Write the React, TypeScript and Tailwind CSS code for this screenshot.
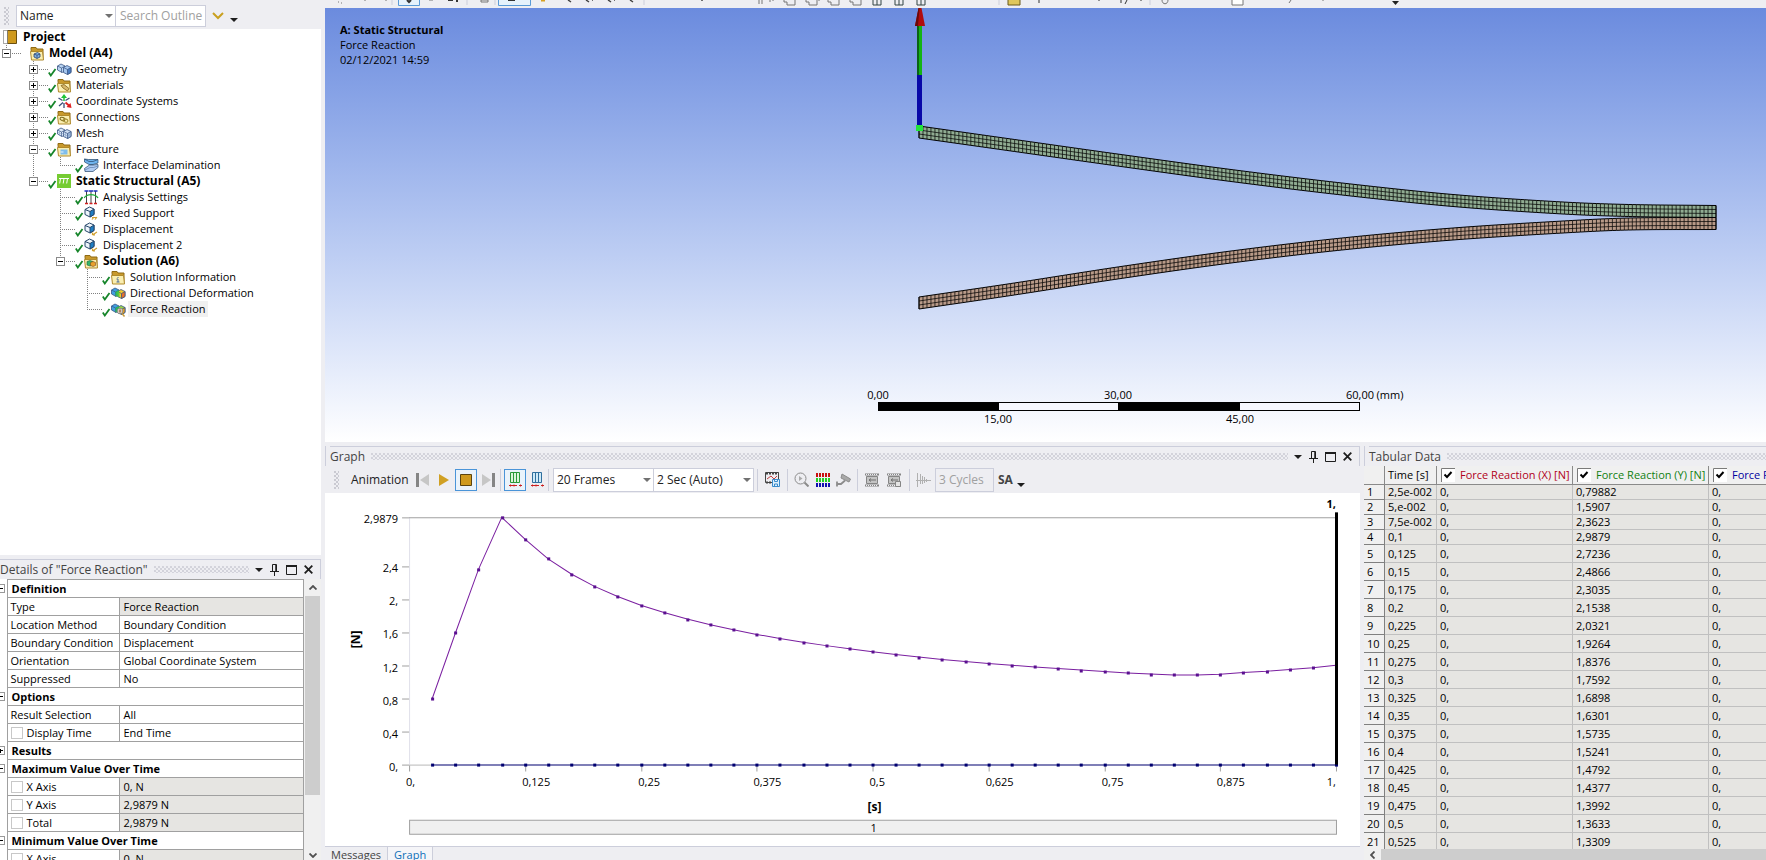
import type { ReactNode } from "react";
import clsx from "clsx";

/* ---------- data ---------- */

type TreeNode = {
  label: string;
  icon: string;
  level: number;
  guides: boolean[];
  expander?: "+" | "-";
  last?: boolean;
  bold?: boolean;
  check?: boolean;
  selected?: boolean;
};

const treeNodes: TreeNode[] = [
  { label: "Model (A4)", icon: "model", level: 0, guides: [], expander: "-", bold: true, last: true },
  { label: "Geometry", icon: "geometry", level: 1, guides: [false], expander: "+", check: true },
  { label: "Materials", icon: "materials", level: 1, guides: [false], expander: "+", check: true },
  { label: "Coordinate Systems", icon: "coords", level: 1, guides: [false], expander: "+", check: true },
  { label: "Connections", icon: "connections", level: 1, guides: [false], expander: "+", check: true },
  { label: "Mesh", icon: "mesh", level: 1, guides: [false], expander: "+", check: true },
  { label: "Fracture", icon: "fracture", level: 1, guides: [false], expander: "-", check: true },
  { label: "Interface Delamination", icon: "delamination", level: 2, guides: [false, true], last: true, check: true },
  { label: "Static Structural (A5)", icon: "static", level: 1, guides: [false], expander: "-", last: true, bold: true, check: true },
  { label: "Analysis Settings", icon: "settings", level: 2, guides: [false, false], check: true },
  { label: "Fixed Support", icon: "support", level: 2, guides: [false, false], check: true },
  { label: "Displacement", icon: "displacement", level: 2, guides: [false, false], check: true },
  { label: "Displacement 2", icon: "displacement", level: 2, guides: [false, false], check: true },
  { label: "Solution (A6)", icon: "solution", level: 2, guides: [false, false], expander: "-", last: true, bold: true, check: true },
  { label: "Solution Information", icon: "info", level: 3, guides: [false, false, false], check: true },
  { label: "Directional Deformation", icon: "deformation", level: 3, guides: [false, false, false], check: true },
  { label: "Force Reaction", icon: "reaction", level: 3, guides: [false, false, false], last: true, check: true, selected: true },
];

type DetailRow =
  | { group: string; open: boolean }
  | { name: string; value: string; checkbox?: boolean; readOnly?: boolean };

const detailRows: DetailRow[] = [
  { group: "Definition", open: true },
  { name: "Type", value: "Force Reaction", readOnly: true },
  { name: "Location Method", value: "Boundary Condition" },
  { name: "Boundary Condition", value: "Displacement" },
  { name: "Orientation", value: "Global Coordinate System" },
  { name: "Suppressed", value: "No" },
  { group: "Options", open: true },
  { name: "Result Selection", value: "All" },
  { name: "Display Time", value: "End Time", checkbox: true },
  { group: "Results", open: false },
  { group: "Maximum Value Over Time", open: true },
  { name: "X Axis", value: "0, N", checkbox: true, readOnly: true },
  { name: "Y Axis", value: "2,9879 N", checkbox: true, readOnly: true },
  { name: "Total", value: "2,9879 N", checkbox: true, readOnly: true },
  { group: "Minimum Value Over Time", open: true },
  { name: "X Axis", value: "0, N", checkbox: true, readOnly: true },
];

const tableRows = [
  ["2,5e-002", "0,79882"],
  ["5,e-002", "1,5907"],
  ["7,5e-002", "2,3623"],
  ["0,1", "2,9879"],
  ["0,125", "2,7236"],
  ["0,15", "2,4866"],
  ["0,175", "2,3035"],
  ["0,2", "2,1538"],
  ["0,225", "2,0321"],
  ["0,25", "1,9264"],
  ["0,275", "1,8376"],
  ["0,3", "1,7592"],
  ["0,325", "1,6898"],
  ["0,35", "1,6301"],
  ["0,375", "1,5735"],
  ["0,4", "1,5241"],
  ["0,425", "1,4792"],
  ["0,45", "1,4377"],
  ["0,475", "1,3992"],
  ["0,5", "1,3633"],
  ["0,525", "1,3309"],
];

const reaction = [
  0.79882, 1.5907, 2.3623, 2.9879, 2.7236, 2.4866, 2.3035, 2.1538, 2.0321,
  1.9264, 1.8376, 1.7592, 1.6898, 1.6301, 1.5735, 1.5241, 1.4792, 1.4377,
  1.3992, 1.3633, 1.3309, 1.3, 1.27, 1.245, 1.222, 1.2, 1.18, 1.16, 1.143,
  1.125, 1.108, 1.094, 1.083, 1.083, 1.093, 1.113, 1.128, 1.15, 1.17, 1.2,
];

/* ---------- tree icons ---------- */

const Folder = ({ children }: { children?: ReactNode }) => (
  <>
    <path d="M1 3.500V1.500h5l1 1.500h6v10H2.500z" fill="#c8992c" stroke="#8f6a14" />
    <path d="M.5 5.500h12l1 8.500h-12z" fill="#faeeb0" stroke="#b08a2c" />
    {children}
  </>
);

const Blocks = ({ a, b, c }: { a: string; b: string; c: string }) => (
  <>
    <path d="M.5 4L4 2l4 2v5l-3 1.500L.5 8z" fill={a} stroke="#3a5584" strokeWidth=".8" />
    <path d="M.5 4l4 2v4.500M4.500 6L8 4" stroke="#3a5584" strokeWidth=".7" fill="none" />
    <path d="M6.500 5.500l3.500-2 4 2v5l-3.500 2-4-2z" fill={b} stroke="#3a5584" strokeWidth=".8" />
    <path d="M10.500 7.500l3.500-2v5l-3.500 2z" fill={c} stroke="#3a5584" strokeWidth=".8" />
    <path d="M6.500 5.500l4 2" stroke="#3a5584" strokeWidth=".7" />
  </>
);

const LoadCube = () => (
  <>
    <path d="M1 3.500L5.500 1 10 3v5.500L6 11 1 8.500z" fill="#eef5fb" stroke="#27476b" />
    <path d="M6 5.500L10 3v5.500L6 11z" fill="#1f7fc4" stroke="#27476b" />
    <path d="M1 3.500l5 2" stroke="#27476b" />
  </>
);

const treeIcons: Record<string, ReactNode> = {
  model: (
    <Folder>
      <path d="M4 8l3.500-1.500L10 8v3l-3 1.500L4 11z" fill="#7fb0e2" stroke="#27406e" strokeWidth=".8" />
      <path d="M4 8l3 1.200L10 8M7 9.200v3" stroke="#27406e" strokeWidth=".7" fill="none" />
    </Folder>
  ),
  geometry: <Blocks a="#b9d4f2" b="#a5c6ee" c="#4a7cc0" />,
  mesh: (
    <>
      <Blocks a="#dbe8f7" b="#cfdff2" c="#a5c0e0" />
      <path d="M1 6.500l3.500 1.500 2-1M2.500 5v4.500M8.500 6.500v5M6.500 8l4 2 3.500-2M12 6.500v5" stroke="#7d99c0" strokeWidth=".5" fill="none" />
    </>
  ),
  materials: (
    <Folder>
      <path d="M4 7.500l3-1 5 4-1.500 2.500L6 10z" fill="#d8b86a" stroke="#7d5f1d" strokeWidth=".8" />
    </Folder>
  ),
  coords: (
    <>
      <path d="M1.500 4l4 2.500M12.500 4L8.500 6.500M2 12l4-3.500M7 9v5" stroke="#3a4f78" strokeWidth="1.300" />
      <path d="M7 3v4" stroke="#1fc43b" strokeWidth="1.500" />
      <path d="M7 0l3 4H4z" fill="#1fc43b" />
      <path d="M14.500 14l-5-1 4-4z" fill="#e02020" />
      <path d="M8.500 8.500l4 3.500" stroke="#e02020" strokeWidth="1.800" />
    </>
  ),
  connections: (
    <Folder>
      <ellipse cx="5.500" cy="9" rx="2.500" ry="1.500" fill="none" stroke="#7d6a1d" transform="rotate(20 5.500 9)" />
      <ellipse cx="8.500" cy="10.500" rx="2.500" ry="1.500" fill="none" stroke="#a08a2c" transform="rotate(20 8.500 10.500)" />
    </Folder>
  ),
  fracture: (
    <Folder>
      <path d="M3.500 7.500h7v5h-7z" fill="#7fbdec" />
      <path d="M3.500 10h3" stroke="#e8f4fc" />
    </Folder>
  ),
  delamination: (
    <>
      <path d="M.5 1l4 .5h9.500v3.500l-5 1.500h-4L.5 4z" fill="#6fb4ee" stroke="#27476b" strokeWidth=".7" />
      <path d="M.5 1l4.500 2.500h4L14 1.500" fill="none" stroke="#27476b" strokeWidth=".7" />
      <path d="M.5 10.500L5.500 7H9l5-.500v3L9 13.500H1z" fill="#b0ccf2" stroke="#27476b" strokeWidth=".7" />
      <path d="M1 12l5-2.500h3.500L14 8" fill="none" stroke="#5d7fae" strokeWidth=".7" />
    </>
  ),
  static: (
    <>
      <path d="M0 0h14v14H0z" fill="#76cc33" />
      <path d="M2 4.500h10M3.500 4.500l-.8 5M7 4.500l-.8 5M10.500 4.500l-.8 5" stroke="#fff" fill="none" />
    </>
  ),
  settings: (
    <>
      <path d="M2.500 1v12M7 1v12M11.500 1v12" stroke="#444" />
      <path d="M.5 1h4M5 1h4M9.500 1h4" stroke="#1c2fbf" strokeWidth="1.500" />
      <path d="M0 8c3-4.500 11-4.500 14 0" stroke="#1fae3b" strokeWidth="1.300" fill="none" />
      <path d="M1 13.500h3M5.500 13.500h3M10 13.500h3" stroke="#d02020" strokeWidth="1.500" />
    </>
  ),
  support: (
    <>
      <LoadCube />
      <path d="M8 13.500l2-2.500M11 13.500l2-2.500M8 11.500h5" stroke="#d0a030" strokeWidth="1.200" />
    </>
  ),
  displacement: (
    <>
      <LoadCube />
      <path d="M8.500 13l4.500-3M8.500 13v-2.500M8.500 13H11" stroke="#d0a030" strokeWidth="1.200" fill="none" />
    </>
  ),
  solution: (
    <Folder>
      <path d="M3 7.500l3-1 3 1v3.500l-3 1-3-1z" fill="#35b56a" stroke="#1f5f3a" strokeWidth=".6" />
      <path d="M6.500 8.500l2.500-1 2.500 1v3L9 12.500l-2.500-1z" fill="#e8a02c" stroke="#7d4a1d" strokeWidth=".6" />
    </Folder>
  ),
  info: (
    <Folder>
      <path d="M7 7v1M5.500 9H7v3M5.500 12h3" stroke="#4a6a9a" fill="none" />
    </Folder>
  ),
  deformation: (
    <>
      <Blocks a="#3f9fe0" b="#f0cc30" c="#e8702c" />
      <path d="M4.500 6L8 4v5l-3.500 1.500z" fill="#2fb85a" />
      <path d="M6.500 5.500l2 1v5l-2-1z" fill="#5ac83a" />
    </>
  ),
  reaction: (
    <>
      <Blocks a="#3f9fe0" b="#9cd44a" c="#e8a020" />
      <path d="M4.500 6L8 4v5l-3.500 1.500z" fill="#2fb85a" />
      <circle cx="9" cy="9" r="2.800" fill="#f0eadc" stroke="#777" strokeWidth=".8" />
      <path d="M9 7v4M7.500 9h3" stroke="#8a4a2a" strokeWidth=".8" />
      <path d="M11 11.500l2.500 3" stroke="#c89a3c" strokeWidth="1.500" />
    </>
  ),
};

/* ---------- small shared pieces ---------- */

const Caret = ({ className }: { className?: string }) => (
  <svg viewBox="0 0 8 4" className={clsx("w-2 h-1 shrink-0", className)} fill="currentColor">
    <path d="M0 0h8L4 4z" />
  </svg>
);

const Dots = () => (
  <div className="flex-1 h-[7px] bg-[radial-gradient(circle_at_1px_1px,#c0c0ca_0.5px,transparent_1px),radial-gradient(circle_at_3px_3px,#c0c0ca_0.5px,transparent_1px)] bg-[length:4px_4px]" />
);

const Grip = () => (
  <div className="w-[5px] h-[18px] shrink-0 bg-[radial-gradient(circle_at_1px_1px,#b0b0ba_0.5px,transparent_1px),radial-gradient(circle_at_3px_3px,#b0b0ba_0.5px,transparent_1px)] bg-[length:4px_4px]" />
);

const PanelHeader = ({ title, controls = true }: { title: string; controls?: boolean }) => (
  <div
    className={clsx(
      "flex items-center gap-1.5 h-5 shrink-0 border-t border-[#cccedb] text-[#444]",
      controls && "border-r pr-[7px]"
    )}>
    <h2 className="text-xs whitespace-nowrap">{title}</h2>
    <Dots />
    {controls && (
      <div className="flex items-center gap-[7px] text-[#1e1e1e]">
        <button aria-label={`${title} menu`}>
          <Caret />
        </button>
        <button aria-label={`Pin ${title}`}>
          <svg viewBox="0 0 9 12" className="w-[9px] h-3" fill="none" stroke="currentColor">
            <path d="M2.500 7V.500h4V7M0 7.500h9M4.500 8v4" />
            <path d="M6 1v6" strokeWidth="1.500" />
          </svg>
        </button>
        <button aria-label={`Maximize ${title}`}>
          <svg viewBox="0 0 11 10" className="w-[11px] h-2.5" fill="none" stroke="currentColor">
            <path d="M.5 1h10v8.500H.5z" />
            <path d="M0 1h11" strokeWidth="2" />
          </svg>
        </button>
        <button aria-label={`Close ${title}`}>
          <svg viewBox="0 0 9 9" className="w-[9px] h-[9px]" stroke="currentColor" strokeWidth="1.800">
            <path d="M.7.7l7.600 7.600M8.300.7L.7 8.300" />
          </svg>
        </button>
      </div>
    )}
  </div>
);

const SelectBox = ({ label, value, className }: { label: string; value: string; className?: string }) => (
  <div className={clsx("relative shrink-0", className)}>
    <select
      aria-label={label}
      defaultValue={value}
      className="appearance-none w-full h-full bg-white border border-[#cccedb] pl-[3px] pr-4 text-[#222]">
      <option>{value}</option>
    </select>
    <Caret className="absolute right-[3px] top-1/2 -mt-0.5 text-[#717171] pointer-events-none" />
  </div>
);

const Separator = () => <div className="w-px h-[22px] shrink-0 bg-[#cccedb]" />;

/* ---------- outline ---------- */

const dotted = { stroke: "#808080", strokeDasharray: "1 1", shapeRendering: "crispEdges" as const };

const Guide = ({ show }: { show: boolean }) => (
  <svg viewBox="0 0 27 16" className="w-[27px] h-4 shrink-0">
    {show && <path d="M6.500 0v16" {...dotted} />}
  </svg>
);

const Elbow = ({ node }: { node: TreeNode }) => (
  <svg viewBox="0 0 21 16" className="w-[21px] h-4" fill="none">
    <path d={node.last ? "M6.500 0v8" : "M6.500 0v16"} {...dotted} />
    <path d="M6 8.500h15" {...dotted} />
    {node.expander && (
      <g shapeRendering="crispEdges">
        <path d="M2.500 4.500h8v8h-8z" fill="#fff" stroke="#8a8a8a" />
        <path d={node.expander === "+" ? "M4 8.500h5M6.500 6v5" : "M4 8.500h5"} stroke="#000" />
      </g>
    )}
  </svg>
);

const TreeRow = ({ node }: { node: TreeNode }) => (
  <li className="flex items-center h-4">
    {node.guides.map((show, i) => (
      <Guide key={i} show={show} />
    ))}
    {node.expander ? (
      <button aria-label={`Toggle ${node.label}`} className="shrink-0">
        <Elbow node={node} />
      </button>
    ) : (
      <span className="shrink-0">
        <Elbow node={node} />
      </span>
    )}
    <svg viewBox="0 0 9 16" className="w-[9px] h-4 shrink-0" fill="none">
      {node.check && <path d="M.8 11.500l2 3L7.500 8" stroke="#16852a" strokeWidth="1.800" />}
    </svg>
    <svg viewBox="0 0 15 15" className="w-[15px] h-[15px] shrink-0" fill="none">
      {treeIcons[node.icon]}
    </svg>
    <span
      className={clsx(
        "ml-0.5 px-0.5 leading-4 whitespace-nowrap",
        node.bold && "font-bold text-xs leading-4",
        node.selected && "bg-[#f0f0f0]"
      )}>
      {node.label}
    </span>
  </li>
);

const Outline = () => (
  <section className="flex-1 min-h-0 flex flex-col">
    <div className="flex items-center h-[29px] shrink-0 pl-1 pt-0.5">
      <Grip />
      <SelectBox label="Search by" value="Name" className="ml-[7px] w-[100px] h-[22px] text-xs" />
      <input
        aria-label="Search outline"
        placeholder="Search Outline"
        className="w-[90px] h-[22px] bg-white border border-l-0 border-[#cccedb] pl-1 text-xs placeholder:text-[#a0a0a0]"
      />
      <button aria-label="Expand" className="ml-1.5">
        <svg viewBox="0 0 12 8" className="w-3 h-2" fill="none" stroke="#c9a020" strokeWidth="2">
          <path d="M1 1l5 5 5-5" />
        </svg>
      </button>
      <button aria-label="More" className="ml-1.5 mt-2">
        <Caret className="text-[#1e1e1e]" />
      </button>
    </div>
    <div className="flex-1 min-h-0 overflow-hidden bg-white text-[11px] text-black">
      <div className="flex items-center h-4 pl-[3px] gap-1.5 font-bold text-xs">
        <svg viewBox="0 0 14 14" className="w-3.5 h-3.5">
          <path d="M4.500.500h9v13h-9z" fill="#cf9a1e" stroke="#6b5010" />
          <path d="M.5.500h4v13h-4z" fill="#fff" stroke="#555" strokeDasharray="1 1" />
        </svg>
        <span className="leading-4">Project</span>
      </div>
      <ul>
        {treeNodes.map((node) => (
          <TreeRow key={node.label} node={node} />
        ))}
      </ul>
    </div>
  </section>
);

/* ---------- details ---------- */

const Details = () => (
  <section className="h-[301px] shrink-0 flex flex-col mt-1">
    <PanelHeader title={'Details of "Force Reaction"'} />
    <div className="flex-1 min-h-0 flex overflow-hidden">
      <div className="flex-1 overflow-hidden bg-white text-[11px] text-black">
        <table className="w-full table-fixed border-collapse">
          <colgroup>
            <col className="w-[7px]" />
            <col className="w-28" />
            <col />
          </colgroup>
          <tbody>
            {detailRows.map((row, i) =>
              "group" in row ? (
                <tr key={i} className="h-[18px]">
                  <td className="p-0">
                    <button aria-label={`Toggle ${row.group}`} className="block">
                      <svg viewBox="0 0 6 9" className="w-1.5 h-[9px]" fill="none" shapeRendering="crispEdges">
                        <path d="M0 .5h4.500v8H0" stroke="#999" />
                        <path d={row.open ? "M0 4.500h3" : "M0 4.500h3M.5 3v4"} stroke="#000" />
                      </svg>
                    </button>
                  </td>
                  <th colSpan={2} className="border border-[#a0a0a0] px-1 py-0 text-left font-bold leading-4">
                    {row.group}
                  </th>
                </tr>
              ) : (
                <tr key={i} className="h-[18px]">
                  <td className="p-0" />
                  <td className="border border-[#a0a0a0] pl-[3px] py-0 leading-4 whitespace-nowrap">
                    {row.checkbox ? (
                      <label className="flex items-center gap-1">
                        <input type="checkbox" className="appearance-none w-3 h-3 border border-[#c8c8c8] bg-white" />
                        {row.name}
                      </label>
                    ) : (
                      row.name
                    )}
                  </td>
                  <td
                    className={clsx(
                      "border border-[#a0a0a0] px-1 py-0 leading-4 whitespace-nowrap",
                      row.readOnly && "bg-[#e6e5e2]"
                    )}>
                    {row.value}
                  </td>
                </tr>
              )
            )}
          </tbody>
        </table>
      </div>
      <div className="flex flex-col items-center w-[17px] shrink-0 bg-[#f0f0f0] text-[#505050]">
        <svg viewBox="0 0 8 5" className="w-2 h-[5px] my-1.5 shrink-0" fill="none" stroke="currentColor" strokeWidth="1.800">
          <path d="M.5 4.500L4 1l3.500 3.500" />
        </svg>
        <div className="w-[15px] h-[199px] bg-[#cdcdcd]" />
        <svg viewBox="0 0 8 5" className="w-2 h-[5px] mt-auto mb-0.5 shrink-0" fill="none" stroke="currentColor" strokeWidth="1.800">
          <path d="M.5.500L4 4 7.500.500" />
        </svg>
      </div>
    </div>
  </section>
);

/* ---------- 3D viewport ---------- */

type Point = [number, number];

const upperEdge: Point[] = [
  [594, 118], [686, 131], [796, 146.5], [906, 161.5], [1017, 175], [1128, 186.5],
  [1238, 194], [1304, 196.5], [1391, 197.5],
];
const lowerEdge: Point[] = [
  [594, 289], [686, 275.5], [796, 258.5], [906, 243], [1017, 230], [1128, 220],
  [1238, 213], [1304, 210], [1391, 209.5],
];

const CELLS = 200;

const edgeY = (edge: Point[], x: number) => {
  let i = 0;
  while (i < edge.length - 2 && x > edge[i + 1][0]) i++;
  const slope = (k: number) => {
    const a = edge[Math.max(k - 1, 0)];
    const b = edge[Math.min(k + 1, edge.length - 1)];
    return (b[1] - a[1]) / (b[0] - a[0]);
  };
  const [x0, y0] = edge[i];
  const [x1, y1] = edge[i + 1];
  const h = x1 - x0;
  const t = (x - x0) / h;
  return (
    (2 * t ** 3 - 3 * t ** 2 + 1) * y0 +
    (t ** 3 - 2 * t ** 2 + t) * h * slope(i) +
    (3 * t ** 2 - 2 * t ** 3) * y1 +
    (t ** 3 - t ** 2) * h * slope(i + 1)
  );
};

const Beam = ({ edge, fill }: { edge: Point[]; fill: string }) => {
  const xs = Array.from({ length: CELLS + 1 }, (_, i) => 594 + (i * 797) / CELLS);
  const line = (offset: number) => xs.map((x) => `${x},${edgeY(edge, x) + offset}`);
  return (
    <g stroke="#000" fill="none">
      <polygon points={[...line(0), ...line(12).reverse()].join(" ")} fill={fill} />
      <g strokeOpacity=".8" strokeWidth=".9">
        <polyline points={line(4).join(" ")} />
        <polyline points={line(8).join(" ")} />
        <path d={xs.map((x) => `M${x} ${edgeY(edge, x)}v12`).join("")} />
      </g>
    </g>
  );
};

const scaleLabels = [
  { x: 553, y: 391, text: "0,00" },
  { x: 793, y: 391, text: "30,00" },
  { x: 1035, y: 391, text: "60,00" },
  { x: 673, y: 415, text: "15,00" },
  { x: 915, y: 415, text: "45,00" },
];

const Viewport = () => (
  <section className="relative flex-1 min-h-0 ml-1 bg-linear-to-b from-[#6b8bde] to-white text-black">
    <svg viewBox="0 0 1441 434" className="block w-full h-full" preserveAspectRatio="xMidYMid slice">
      <Beam edge={upperEdge} fill="#90ac92" />
      <Beam edge={lowerEdge} fill="#b89a88" />
      <path d="M592 18h5v49h-5z" fill="#14b414" />
      <path d="M592 67h5v52h-5z" fill="#0808a8" />
      <path d="M592 18h2v49h-2z" fill="#0a6414" />
      <path d="M593.500 0h3l3.500 18h-10z" fill="#b00c0c" />
      <path d="M593.500 0h1L593 18h-3z" fill="#6a0808" />
      <path d="M591 117h7v6h-7z" fill="#22e43a" />
      <path d="M553 394.500h481v8H553z" fill="#f6f7fe" stroke="#000" shapeRendering="crispEdges" />
      <path d="M553 394h121v9H553zM793 394h122v9H793z" fill="#000" />
      <g textAnchor="middle" fontSize="11">
        {scaleLabels.map((l) => (
          <text key={l.text} x={l.x} y={l.y}>
            {l.text}
          </text>
        ))}
        <text x="1065" y="391">(mm)</text>
      </g>
    </svg>
    <div className="absolute left-[15px] top-[14px] text-[11px] leading-[15px]">
      <p className="font-bold">A: Static Structural</p>
      <p>Force Reaction</p>
      <p>02/12/2021 14:59</p>
    </div>
  </section>
);

/* Lower edge of the ribbon that shows above the viewport. */
const RibbonEdge = () => (
  <svg viewBox="0 0 1445 8" className="w-[1445px] h-2 shrink-0" fill="none" stroke="#777">
    <path d="M17 2h1M20 3h1M44 0v1M65 0v1M452 0v1M498 0v1" />
    <path d="M77.500-2h21v7.500h-21zM177.500-2h32v7.500h-32z" fill="#e6f2fc" stroke="#5a9ad6" />
    <path d="M86 0l2 2 2-2M187 0h7M127 0h5M136 0v2" stroke="#333" strokeWidth="2" />
    <path d="M108 0h4M160 0h7v2h-7z" />
    <path d="M71 0v5M146 0v5M174 0v5M323 0v5M678 0v5M829 0v5" stroke="#cccedb" />
    <path d="M220 0h4" stroke="#d8a020" strokeWidth="3" />
    <path d="M247 0l3 2M265 0l3 2M287 0l3 2M309 0l3 2M271 0h1M293 0h1M381 0v1" stroke="#444" strokeWidth="1.500" />
    <path d="M438 0v4M441 0v4M449 0v2" />
    <path d="M463 0v2h3v3h8V0M485 0v2h3v3h8V0M507 0v2h3v3h8V0M529 0v2h3v3h8V0" />
    <path d="M552-2h8v7h-8zM574-2h8v7h-8zM596-2h8v7h-8zM556 0v5M578 0v5M600 0v5" stroke="#344" />
    <path d="M687-2h12v7h-12z" fill="#dfc75c" stroke="#6b5a1a" />
    <path d="M718 0v3M777 0h2M800 0v3M806 0l-2 4M820 0v1" stroke="#333" />
    <path d="M841 0c0 5 6 5 6 0" />
    <path d="M911-2h11v7h-11z" fill="#fff" />
    <path d="M970 0l-2 3M1002 0v1" />
    <path d="M1071 1h7l-3.500 4z" fill="#222" stroke="none" />
  </svg>
);

/* ---------- graph ---------- */

const Filmstrip = ({ zoom }: { zoom?: boolean }) => (
  <svg viewBox="0 0 14 14" className="w-3.5 h-3.5" fill="none" stroke="#858585">
    <path d="M0 1.500h14M0 12.500h14" strokeWidth="2" />
    <path d="M1 1.500h12M1 12.500h12" stroke="#eeeef2" strokeDasharray="1 1" />
    <path d="M1.500 3.500h11v7h-11z" fill="#c4c4c4" />
    <path d="M4 7h7M4 7l2-1.500M4 7l2 1.500" stroke="#707070" />
    {zoom && <path d="M8.500 8.500h5v5h-5z" fill="#e4e4e4" />}
  </svg>
);

const Columns = ({ color, fill }: { color: string; fill: string }) => (
  <svg viewBox="0 0 14 15" className="w-3.5 h-[15px]" fill="none">
    <path d="M2.500 .5h9v10h-9zM5.500 .5v10M8.500 .5v10" stroke={color} fill={fill} />
    <path d="M1 13.500h8M11 13.500h3M2.500 12.500v2M6 12.500v2M12.500 12.500v2" stroke="#cc2020" />
  </svg>
);

const GraphToolbar = () => (
  <div className="flex items-center h-[27px] shrink-0 pl-[9px] text-xs text-[#222] overflow-hidden">
    <Grip />
    <span className="ml-3 w-[57px] whitespace-nowrap">Animation</span>
    <button aria-label="Previous frame" className="ml-2">
      <svg viewBox="0 0 13 14" className="w-[13px] h-3.5">
        <path d="M0 0h3v14H0z" fill="#858585" />
        <path d="M13 1v12L4 7z" fill="#c6c6c6" />
      </svg>
    </button>
    <button aria-label="Play" className="ml-2.5">
      <svg viewBox="0 0 10 14" className="w-2.5 h-3.5">
        <path d="M0 1l10 6-10 6z" fill="#d0a024" />
      </svg>
    </button>
    <button aria-label="Stop" className="ml-1.5 grid place-items-center w-[22px] h-[22px] border border-[#4a94d8] bg-[#eaf3fb]">
      <svg viewBox="0 0 12 12" className="w-3 h-3">
        <path d="M.5.500h11v11H.5z" fill="#cf9a1e" stroke="#5b4410" />
      </svg>
    </button>
    <button aria-label="Next frame" className="mx-[5px]">
      <svg viewBox="0 0 13 14" className="w-[13px] h-3.5">
        <path d="M10 0h3v14h-3z" fill="#858585" />
        <path d="M0 1v12l9-6z" fill="#c6c6c6" />
      </svg>
    </button>
    <Separator />
    <button aria-label="Distributed" className="ml-[3px] grid place-items-center w-[22px] h-[22px] border border-[#4a94d8] bg-[#eaf3fb]">
      <Columns color="#2a9a3a" fill="#dcf6dc" />
    </button>
    <button aria-label="Result sets" className="mx-1">
      <Columns color="#2f6f9e" fill="#cfeaf8" />
    </button>
    <Separator />
    <SelectBox label="Frames" value="20 Frames" className="ml-1 w-[101px] h-6" />
    <SelectBox label="Duration" value="2 Sec (Auto)" className="-ml-px mr-[3px] w-[101px] h-6" />
    <Separator />
    <button aria-label="Export video" className="mx-[7px]">
      <svg viewBox="0 0 15 15" className="w-[15px] h-[15px]" fill="none">
        <path d="M1 1.500h13M1 10.500h7" stroke="#444" strokeWidth="2" strokeDasharray="2 1" />
        <path d="M.5.500h13v10H.5z" stroke="#444" />
        <path d="M2 7l4-3 3 3 3-3" stroke="#c04040" />
        <path d="M7.500 7.500h7v7h-7z" fill="#dff0fc" stroke="#3a8ccc" />
        <path d="M9.500 7.500v2h3v-2M9.500 14v-2h3v2" stroke="#3a8ccc" />
      </svg>
    </button>
    <Separator />
    <button aria-label="Zoom to fit" className="ml-1.5">
      <svg viewBox="0 0 15 15" className="w-[15px] h-[15px]" fill="none" stroke="#8c8c8c">
        <circle cx="6.500" cy="6.500" r="5.500" />
        <path d="M10.500 10.500l4 4" strokeWidth="2" />
        <path d="M5 4v5l3.500-2.500z" fill="#aaa" stroke="none" />
      </svg>
    </button>
    <button aria-label="Show all" className="ml-[7px]">
      <svg viewBox="0 0 14 14" className="w-3.5 h-3.5" strokeWidth="4" strokeDasharray="2 1">
        <path d="M0 2h14" stroke="#c81010" />
        <path d="M0 7h14" stroke="#22d022" />
        <path d="M0 12h14" stroke="#1010b0" />
      </svg>
    </button>
    <button aria-label="Camera" className="mx-1.5">
      <svg viewBox="0 0 15 14" className="w-[15px] h-3.5" fill="#a8a8a8" stroke="#8c8c8c">
        <path d="M6 1l8.500 5-1.500 3-8-4z" />
        <path d="M9 7.500L5 11H1M1 8.500v5" fill="none" strokeWidth="1.800" />
      </svg>
    </button>
    <Separator />
    <button aria-label="Film" className="ml-[7px]">
      <Filmstrip />
    </button>
    <button aria-label="Film zoom" className="mx-2">
      <Filmstrip zoom />
    </button>
    <Separator />
    <svg viewBox="0 0 15 14" className="w-[15px] h-3.5 ml-1.5 mr-1" stroke="#b0b0b0">
      <path d="M1.500 0v14M4.500 1v10M6.500 3v8M8.500 4v6M10.500 6v3M0 7.500h15" />
    </svg>
    <input
      aria-label="Cycles"
      disabled
      defaultValue="3 Cycles"
      className="w-[59px] h-6 shrink-0 border border-[#cccedb] pl-[3px] text-[#a0a0a0]"
    />
    <span className="ml-1 font-bold text-[#444]">SA</span>
    <button aria-label="More options" className="ml-1 mt-2.5">
      <Caret className="text-[#1e1e1e]" />
    </button>
  </div>
);

const X0 = 84;
const X_SPAN = 926;
const Y0 = 272;
const Y_UNIT = 82.67;

const yTicks = [
  { v: 0, text: "0," },
  { v: 0.4, text: "0,4" },
  { v: 0.8, text: "0,8" },
  { v: 1.2, text: "1,2" },
  { v: 1.6, text: "1,6" },
  { v: 2, text: "2," },
  { v: 2.4, text: "2,4" },
  { v: 2.9879, text: "2,9879" },
];
const xTicks = ["0,", "0,125", "0,25", "0,375", "0,5", "0,625", "0,75", "0,875", "1,"];

const Chart = () => {
  const points = reaction.map((v, i) => [X0 + ((i + 1) * X_SPAN) / 40, Y0 - v * Y_UNIT]);
  return (
    <svg viewBox="0 0 1034 354" className="block w-full h-full" fontSize="11" preserveAspectRatio="xMinYMid slice">
      <path d={`M${X0 + 0.5} 25v247`} stroke="#e0e0ea" />
      <path d={`M${X0} 25.500h${X_SPAN}`} stroke="#a0a0a0" />
      <path d={`M${X0} 272.500h24`} stroke="#b8b8b8" />
      {yTicks.map((t) => (
        <g key={t.text}>
          <path d={`M${X0 - 7} ${Math.round(Y0 - t.v * Y_UNIT) + 0.5}h7`} stroke="#a0a0a0" />
          <text x="73" y={Math.round(Y0 - t.v * Y_UNIT) + 6} textAnchor="end">
            {t.text}
          </text>
        </g>
      ))}
      {xTicks.map((text, i) => {
        const x = Math.round(X0 + (i * X_SPAN) / 8);
        const lastTick = i === xTicks.length - 1;
        return (
          <g key={text}>
            <path d={`M${x + 0.5} 273v6`} stroke="#a0a0a0" />
            <text x={lastTick ? x : x - 3} y="293" textAnchor={lastTick ? "end" : "start"}>
              {text}
            </text>
          </g>
        );
      })}
      <path d={`M${points[0][0]} 272.500H${X0 + X_SPAN}`} stroke="#000070" />
      <polyline points={points.map((p) => p.join(",")).join(" ")} fill="none" stroke="#7a1fa0" />
      {points.map(([x, y], i) => (
        <g key={i}>
          <rect x={Math.round(x) - 1} y={Math.round(y) - 1} width="3" height="3" fill="#5a1090" />
          <rect x={Math.round(x) - 1} y="271" width="3" height="3" fill="#000070" />
        </g>
      ))}
      <path d="M1010.500 20v252" stroke="#000" strokeWidth="3" />
      <text x="1010" y="16" textAnchor="end" fontWeight="bold">1,</text>
      <text x="549" y="318" textAnchor="middle" fontWeight="bold" fontSize="12">[s]</text>
      <text transform="translate(35 147) rotate(-90)" textAnchor="middle" fontWeight="bold" fontSize="12">[N]</text>
      <path d="M84.500 327.500h926v14h-926z" fill="#f0f0f0" stroke="#a0a0a0" />
      <text x="548" y="339" textAnchor="middle">1</text>
    </svg>
  );
};

const Graph = () => (
  <section className="flex-1 min-w-0 flex flex-col">
    <div className="pl-1 border-l border-[#cccedb]">
      <PanelHeader title="Graph" />
    </div>
    <GraphToolbar />
    <div className="flex-1 min-h-0 bg-white">
      <Chart />
    </div>
    <div className="flex h-3.5 shrink-0 overflow-hidden border-t border-[#cccedb] text-[11px] leading-4 text-[#444]">
      <button className="px-1.5 h-4 border-r border-[#cccedb]">Messages</button>
      <button className="px-1.5 h-4 border-r border-[#cccedb] bg-[#f5f5f8] text-[#0e70b8]">Graph</button>
    </div>
  </section>
);

/* ---------- tabular data ---------- */

const HeadCell = ({ label, className }: { label: string; className: string }) => (
  <th className="p-0 border-r border-b border-[#8a8a8a] bg-[#f0f0f0] font-normal">
    <label className={clsx("flex items-center gap-[5px] pl-1 whitespace-nowrap", className)}>
      <input type="checkbox" defaultChecked className="peer sr-only" />
      <svg viewBox="0 0 14 14" className="w-3.5 h-3.5 shrink-0" fill="none">
        <path d="M0 0h14v14H0z" fill="#fff" />
        <path d="M.5 14V.500H14" stroke="#7a7a7a" />
        <path d="M3.500 6.500L6 9l4.500-5" stroke="#000" strokeWidth="2" />
      </svg>
      {label}
    </label>
  </th>
);

const TabularData = () => (
  <section className="w-[402px] shrink-0 flex flex-col overflow-hidden">
    <div className="pl-1 border-l border-[#cccedb]">
      <PanelHeader title="Tabular Data" controls={false} />
    </div>
    <div className="flex-1 min-h-0 overflow-hidden text-[11px] text-black">
      <table className="w-[481px] table-fixed border-separate border-spacing-0">
        <colgroup>
          <col className="w-[21px]" />
          <col className="w-[52px]" />
          <col className="w-[136px]" />
          <col className="w-[136px]" />
          <col className="w-[136px]" />
        </colgroup>
        <thead>
          <tr className="h-[19px]">
            <th aria-label="Row" className="p-0 border-r border-b border-[#8a8a8a] bg-[#f0f0f0]" />
            <th className="p-0 pl-[3px] border-r border-b border-[#8a8a8a] bg-[#f0f0f0] text-left font-normal">Time [s]</th>
            <HeadCell label="Force Reaction (X) [N]" className="text-[#b00020]" />
            <HeadCell label="Force Reaction (Y) [N]" className="text-[#108010]" />
            <HeadCell label="Force Reaction (Z) [N]" className="text-[#0000a0]" />
          </tr>
        </thead>
        <tbody>
          {tableRows.map(([time, y], i) => (
            <tr key={time} className={clsx("bg-[#e6e5e2]", i < 4 ? "h-[15px] leading-[14px]" : "h-[18px] leading-[17px]")}>
              <th className="p-0 pl-[3px] text-left font-normal bg-[#f0f0f0] border-r border-b border-[#808080]">{i + 1}</th>
              <td className="p-0 pl-[3px] border-r border-b border-[#c0c0c0]">{time}</td>
              <td className="p-0 pl-[3px] border-r border-b border-[#c0c0c0]">0,</td>
              <td className="p-0 pl-[3px] border-r border-b border-[#c0c0c0]">{y}</td>
              <td className="p-0 pl-[3px] border-r border-b border-[#c0c0c0]">0,</td>
            </tr>
          ))}
        </tbody>
      </table>
    </div>
    <div className="flex items-center h-[11px] shrink-0 bg-[#f0f0f0]">
      <button aria-label="Scroll left" className="grid place-items-center w-[17px] text-[#505050]">
        <svg viewBox="0 0 5 8" className="w-[5px] h-2" fill="none" stroke="currentColor" strokeWidth="1.800">
          <path d="M4.500.500L1 4l3.500 3.500" />
        </svg>
      </button>
      <div className="flex-1 h-full bg-[#cdcdcd]" />
    </div>
  </section>
);

const App = () => {
  return (
    <div className="flex h-screen overflow-hidden bg-[#eeeef2] font-['Open_Sans',sans-serif]">
      <aside className="flex flex-col w-[321px] shrink-0">
        <Outline />
        <Details />
      </aside>
      <main className="flex-1 min-w-0 flex flex-col overflow-hidden">
        <RibbonEdge />
        <Viewport />
        <div className="flex gap-1 h-[414px] shrink-0 pl-1 mt-1">
          <Graph />
          <TabularData />
        </div>
      </main>
    </div>
  );
};

export default App;
